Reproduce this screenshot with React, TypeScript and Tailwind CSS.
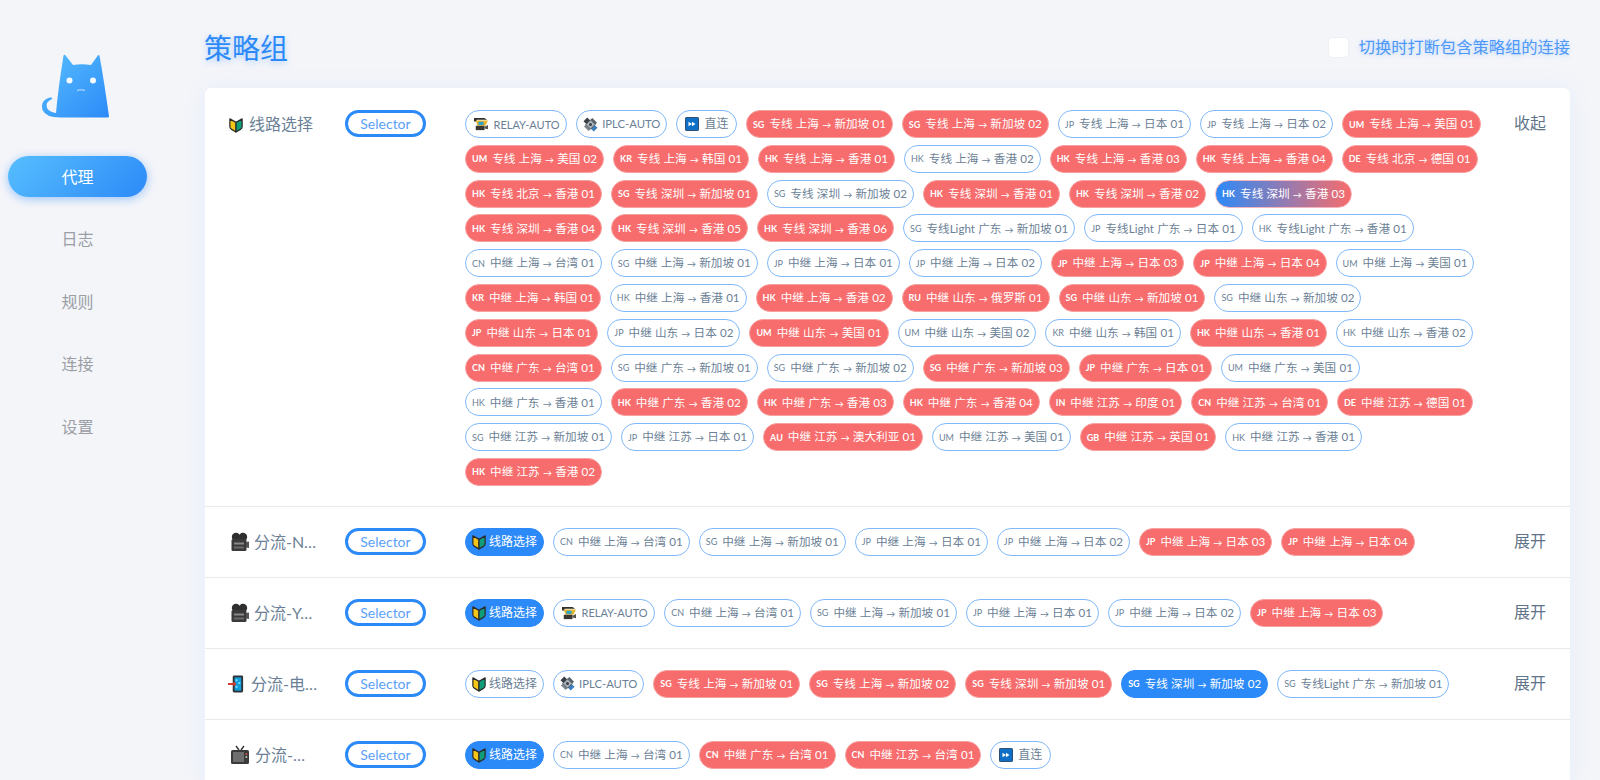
import React from "react";

type S = "n" | "r" | "b" | "g";
type Item = [S, string, string?];

const FONT = 'Lato,"Noto Sans CJK SC",sans-serif';

function Shield() {
  return (
    <svg viewBox="0 0 16 18" className="inline-block w-[14px] h-[16px] align-[-3px]">
      <path d="M1 2 L8 6 L8 17 L3 14 Q1 13 1 11 Z" fill="#f5c518" stroke="#2b2b2b" strokeWidth="1.4" strokeLinejoin="round" />
      <path d="M15 2 L8 6 L8 17 L13 14 Q15 13 15 11 Z" fill="#0f9d7a" stroke="#2b2b2b" strokeWidth="1.4" strokeLinejoin="round" />
    </svg>
  );
}
function Relay() {
  return (
    <svg viewBox="0 0 18 16" className="inline-block w-[16px] h-[14px] align-[-3px]">
      <path d="M1 1 H13 L16 3 H4 L4 5 H1 Z" fill="#33302c" />
      <path d="M3 4 H17 L14 10 H5 Z" fill="#e8b72e" />
      <rect x="6" y="5.5" width="6" height="3.5" fill="#2aa3c9" />
      <path d="M3 10 H13 V15 H3 Z" fill="#3b3733" />
      <path d="M13 11 L17 9 V14 L13 13 Z" fill="#57524c" />
    </svg>
  );
}
function Sat() {
  return (
    <svg viewBox="0 0 16 16" className="inline-block w-[15px] h-[15px] align-[-3px]">
      <path d="M0.5 4.5 L4.5 0.5 L8 4 L4 8 Z" fill="#3a3f45" />
      <path d="M8 12 L12 8 L15.5 11.5 L11.5 15.5 Z" fill="#3f7fbd" />
      <path d="M10 1 L15 6 L13 8 L8 3 Z" fill="#59636d" />
      <path d="M1 10 L3 8 L8 13 L6 15 Z" fill="#7d868f" />
      <path d="M3 8 L8 3 L13 8 L8 13 Z" fill="#aab2ba" stroke="#3a3f45" strokeWidth="0.8" />
      <circle cx="8" cy="8" r="1.6" fill="#3a3f45" />
    </svg>
  );
}
function Forward() {
  return (
    <svg viewBox="0 0 16 16" className="inline-block w-[14px] h-[14px] align-[-3px]">
      <rect x="0.5" y="0.5" width="15" height="15" rx="1" fill="#0f6fc6" stroke="#1b3c5c" />
      <path d="M4 5.5 L8 8 L4 10.5 Z M8 5.5 L12 8 L8 10.5 Z" fill="#fff" />
    </svg>
  );
}
function Camera() {
  return (
    <svg viewBox="0 0 20 20" className="inline-block w-[20px] h-[20px] align-[-4px] ml-[2px] mr-[4px]">
      <circle cx="6" cy="5" r="4.2" fill="#2f2f2f" />
      <circle cx="13" cy="5" r="4.2" fill="#2f2f2f" />
      <rect x="1.5" y="7" width="15" height="12" rx="1.5" fill="#3a3a3a" />
      <rect x="4" y="10.5" width="10" height="2" fill="#8a8a8a" />
      <rect x="4" y="14.5" width="10" height="2" fill="#6b6b6b" />
      <path d="M16 10 L19 9.5 V16 L16 15.5 Z" fill="#555" />
    </svg>
  );
}
function Phone() {
  return (
    <svg viewBox="0 0 18 20" className="inline-block w-[17px] h-[20px] align-[-4px] mr-[6px]">
      <rect x="5" y="1" width="11" height="18" rx="1.5" fill="#2d3338" />
      <rect x="7" y="3" width="7" height="14" fill="#0f9fdc" />
      <rect x="8" y="5" width="2" height="2" fill="#7fdcff" />
      <rect x="11" y="8" width="2" height="2" fill="#7fdcff" />
      <rect x="8" y="12" width="2" height="2" fill="#7fdcff" />
      <path d="M0 9 H6 V7 L9 10 L6 13 V11 H0 Z" fill="#d43a2f" />
    </svg>
  );
}
function Tv() {
  return (
    <svg viewBox="0 0 20 20" className="inline-block w-[20px] h-[20px] align-[-4px] ml-[2px] mr-[5px]">
      <path d="M6 1 L9 5 M14 1 L11 5" stroke="#333" strokeWidth="1.4" />
      <rect x="1" y="5" width="18" height="14" rx="1.5" fill="#3a3a3a" />
      <rect x="3" y="7" width="11" height="10" fill="#6e6e6e" />
      <circle cx="16.4" cy="9" r="1" fill="#e0533d" />
      <circle cx="16.4" cy="12" r="1" fill="#c9c9c9" />
    </svg>
  );
}

const ICONS: Record<string, { node: React.ReactNode; pad: string; gap: string }> = {
  shield: { node: <Shield />, pad: "px-[6px]", gap: "mr-[3px]" },
  relay: { node: <Relay />, pad: "px-[6.5px]", gap: "mr-[5px]" },
  sat: { node: <Sat />, pad: "px-[6px]", gap: "mr-[4px]" },
  fwd: { node: <Forward />, pad: "px-[7.5px]", gap: "mr-[5.5px]" },
};

const STYLES: Record<S, string> = {
  n: "bg-white border-[#7fb8fb] text-[#6b7f96]",
  r: "bg-[#f76c6c] border-[#f9a0a0] text-white",
  b: "bg-[#2c8af8] border-[#2c8af8] text-white",
  g: "bg-[linear-gradient(90deg,#2c8af8,#f76c6c)] border-[#f4b4bc] text-white",
};

function Label({ text }: { text?: string }) {
  const parts = (text ?? "").split("→");
  if (parts.length < 2) {
    const cls = text === "RELAY-AUTO" ? "text-[11px]" : text === "IPLC-AUTO" ? "text-[11.3px]" : "";
    return <span className={cls}>{text}</span>;
  }
  return (
    <span className="whitespace-pre text-[11.6px] [word-spacing:0.25px]">
      {parts[0]}
      <span className="text-[9px]">→</span>
      {parts[1]}
    </span>
  );
}

function Pill({ item }: { item: Item }) {
  const [s, flag, text] = item;
  const icon = ICONS[flag];
  return (
    <span className={`inline-flex items-center h-[28px] rounded-[14px] border text-[12px] leading-none whitespace-nowrap ${icon ? icon.pad : "px-[6px]"} ${STYLES[s]}`}>
      {icon ? (
        <span className={`inline-flex ${icon.gap}`}>{icon.node}</span>
      ) : (
        <span className={`text-[9px] mr-[5px] ${s === "n" ? "font-normal" : "font-bold"}`}>{flag}</span>
      )}
      <Label text={text} />
    </span>
  );
}

const A = "→";
const first: Item[] = [
  ["n", "relay", "RELAY-AUTO"],
  ["n", "sat", "IPLC-AUTO"],
  ["n", "fwd", "直连"],
  ["r", "SG", `专线 上海 ${A} 新加坡 01`],
  ["r", "SG", `专线 上海 ${A} 新加坡 02`],
  ["n", "JP", `专线 上海 ${A} 日本 01`],
  ["n", "JP", `专线 上海 ${A} 日本 02`],
  ["r", "UM", `专线 上海 ${A} 美国 01`],
  ["r", "UM", `专线 上海 ${A} 美国 02`],
  ["r", "KR", `专线 上海 ${A} 韩国 01`],
  ["r", "HK", `专线 上海 ${A} 香港 01`],
  ["n", "HK", `专线 上海 ${A} 香港 02`],
  ["r", "HK", `专线 上海 ${A} 香港 03`],
  ["r", "HK", `专线 上海 ${A} 香港 04`],
  ["r", "DE", `专线 北京 ${A} 德国 01`],
  ["r", "HK", `专线 北京 ${A} 香港 01`],
  ["r", "SG", `专线 深圳 ${A} 新加坡 01`],
  ["n", "SG", `专线 深圳 ${A} 新加坡 02`],
  ["r", "HK", `专线 深圳 ${A} 香港 01`],
  ["r", "HK", `专线 深圳 ${A} 香港 02`],
  ["g", "HK", `专线 深圳 ${A} 香港 03`],
  ["r", "HK", `专线 深圳 ${A} 香港 04`],
  ["r", "HK", `专线 深圳 ${A} 香港 05`],
  ["r", "HK", `专线 深圳 ${A} 香港 06`],
  ["n", "SG", `专线Light 广东 ${A} 新加坡 01`],
  ["n", "JP", `专线Light 广东 ${A} 日本 01`],
  ["n", "HK", `专线Light 广东 ${A} 香港 01`],
  ["n", "CN", `中继 上海 ${A} 台湾 01`],
  ["n", "SG", `中继 上海 ${A} 新加坡 01`],
  ["n", "JP", `中继 上海 ${A} 日本 01`],
  ["n", "JP", `中继 上海 ${A} 日本 02`],
  ["r", "JP", `中继 上海 ${A} 日本 03`],
  ["r", "JP", `中继 上海 ${A} 日本 04`],
  ["n", "UM", `中继 上海 ${A} 美国 01`],
  ["r", "KR", `中继 上海 ${A} 韩国 01`],
  ["n", "HK", `中继 上海 ${A} 香港 01`],
  ["r", "HK", `中继 上海 ${A} 香港 02`],
  ["r", "RU", `中继 山东 ${A} 俄罗斯 01`],
  ["r", "SG", `中继 山东 ${A} 新加坡 01`],
  ["n", "SG", `中继 山东 ${A} 新加坡 02`],
  ["r", "JP", `中继 山东 ${A} 日本 01`],
  ["n", "JP", `中继 山东 ${A} 日本 02`],
  ["r", "UM", `中继 山东 ${A} 美国 01`],
  ["n", "UM", `中继 山东 ${A} 美国 02`],
  ["n", "KR", `中继 山东 ${A} 韩国 01`],
  ["r", "HK", `中继 山东 ${A} 香港 01`],
  ["n", "HK", `中继 山东 ${A} 香港 02`],
  ["r", "CN", `中继 广东 ${A} 台湾 01`],
  ["n", "SG", `中继 广东 ${A} 新加坡 01`],
  ["n", "SG", `中继 广东 ${A} 新加坡 02`],
  ["r", "SG", `中继 广东 ${A} 新加坡 03`],
  ["r", "JP", `中继 广东 ${A} 日本 01`],
  ["n", "UM", `中继 广东 ${A} 美国 01`],
  ["n", "HK", `中继 广东 ${A} 香港 01`],
  ["r", "HK", `中继 广东 ${A} 香港 02`],
  ["r", "HK", `中继 广东 ${A} 香港 03`],
  ["r", "HK", `中继 广东 ${A} 香港 04`],
  ["r", "IN", `中继 江苏 ${A} 印度 01`],
  ["r", "CN", `中继 江苏 ${A} 台湾 01`],
  ["r", "DE", `中继 江苏 ${A} 德国 01`],
  ["n", "SG", `中继 江苏 ${A} 新加坡 01`],
  ["n", "JP", `中继 江苏 ${A} 日本 01`],
  ["r", "AU", `中继 江苏 ${A} 澳大利亚 01`],
  ["n", "UM", `中继 江苏 ${A} 美国 01`],
  ["r", "GB", `中继 江苏 ${A} 英国 01`],
  ["n", "HK", `中继 江苏 ${A} 香港 01`],
  ["r", "HK", `中继 江苏 ${A} 香港 02`],
];

const groups: { icon: React.ReactNode; name: string; action: string; items: Item[] }[] = [
  { icon: <span className="ml-[1px] mr-[6px]"><Shield /></span>, name: "线路选择", action: "收起", items: first },
  {
    icon: <Camera />,
    name: "分流-Netflix",
    action: "展开",
    items: [
      ["b", "shield", "线路选择"],
      ["n", "CN", `中继 上海 ${A} 台湾 01`],
      ["n", "SG", `中继 上海 ${A} 新加坡 01`],
      ["n", "JP", `中继 上海 ${A} 日本 01`],
      ["n", "JP", `中继 上海 ${A} 日本 02`],
      ["r", "JP", `中继 上海 ${A} 日本 03`],
      ["r", "JP", `中继 上海 ${A} 日本 04`],
    ],
  },
  {
    icon: <Camera />,
    name: "分流-YouTube",
    action: "展开",
    items: [
      ["b", "shield", "线路选择"],
      ["n", "relay", "RELAY-AUTO"],
      ["n", "CN", `中继 上海 ${A} 台湾 01`],
      ["n", "SG", `中继 上海 ${A} 新加坡 01`],
      ["n", "JP", `中继 上海 ${A} 日本 01`],
      ["n", "JP", `中继 上海 ${A} 日本 02`],
      ["r", "JP", `中继 上海 ${A} 日本 03`],
    ],
  },
  {
    icon: <Phone />,
    name: "分流-电报消息",
    action: "展开",
    items: [
      ["n", "shield", "线路选择"],
      ["n", "sat", "IPLC-AUTO"],
      ["r", "SG", `专线 上海 ${A} 新加坡 01`],
      ["r", "SG", `专线 上海 ${A} 新加坡 02`],
      ["r", "SG", `专线 深圳 ${A} 新加坡 01`],
      ["b", "SG", `专线 深圳 ${A} 新加坡 02`],
      ["n", "SG", `专线Light 广东 ${A} 新加坡 01`],
    ],
  },
  {
    icon: <Tv />,
    name: "分流-巴哈姆特",
    action: "",
    items: [
      ["b", "shield", "线路选择"],
      ["n", "CN", `中继 上海 ${A} 台湾 01`],
      ["r", "CN", `中继 广东 ${A} 台湾 01`],
      ["r", "CN", `中继 江苏 ${A} 台湾 01`],
      ["n", "fwd", "直连"],
    ],
  },
];

const nav = ["代理", "日志", "规则", "连接", "设置"];

export default function App() {
  return (
    <div className="flex h-[780px] overflow-hidden bg-[#f4f5f9]" style={{ fontFamily: FONT }}>
      <aside className="w-[205px] shrink-0 flex flex-col">
        <div className="mt-[50px] ml-[40px] w-[80px] h-[75px]">
          <svg viewBox="0 0 80 75" className="w-[80px] h-[75px]">
            <defs>
              <linearGradient id="cat" x1="0" y1="0" x2="1" y2="1">
                <stop offset="0" stopColor="#57befe" />
                <stop offset="1" stopColor="#2c8af8" />
              </linearGradient>
            </defs>
            <path
              d="M23.5 5.5 Q24.5 4 26 6 L33 15 Q41.5 13.5 51 15 L57.5 6 Q59 4 59.5 6 Q64 30 69 66.5 Q69.3 67.5 67.5 67.5 L22 67.5 Q6 68 2.5 60 Q0 50 10 47.5 Q13 47 12 49 Q5 52 7 58 Q9 62 16 63 Q18 40 23.5 5.5 Z"
              fill="url(#cat)"
            />
            <circle cx="29.5" cy="30.5" r="3" fill="#fff" opacity="0.95" />
            <circle cx="53" cy="30.5" r="3" fill="#fff" opacity="0.95" />
            <path d="M37 40.5 Q39 39.5 41 40 Q43 39.5 45 40.5" stroke="#d4e9ff" strokeWidth="0.9" fill="none" />
          </svg>
        </div>
        <nav className="mt-[31px] flex flex-col gap-[21.6px]">
          {nav.map((n, i) => (
            <div
              key={n}
              className={
                i === 0
                  ? "ml-[8px] w-[139px] h-[41px] rounded-[21px] flex items-center justify-center text-[16px] text-white bg-[linear-gradient(135deg,#57befe,#2c8af8)] shadow-[0_2px_10px_rgba(44,138,248,0.45)]"
                  : "ml-[8px] w-[139px] h-[41px] flex items-center justify-center text-[16px] text-[#9a9ea5]"
              }
            >
              {n}
            </div>
          ))}
        </nav>
      </aside>
      <main className="flex-1 pr-[30px] min-w-0">
        <header className="h-[88px] flex items-start justify-between">
          <h1 className="mt-[27px] -ml-[1px] text-[28px] leading-[42px] text-[#2c8af8] [text-shadow:0_2px_6px_rgba(44,138,248,0.35)]">策略组</h1>
          <label className="mt-[36px] flex items-center gap-[10px]">
            <span className="w-[21px] h-[21px] rounded-[4px] bg-white border border-[#eef0f4]" />
            <span className="text-[16.25px] leading-[22px] text-[#4d98f8] [text-shadow:0_1px_4px_rgba(44,138,248,0.3)]">切换时打断包含策略组的连接</span>
          </label>
        </header>
        <section className="bg-white rounded-[6px] shadow-[0_0_24px_rgba(44,138,248,0.07)]">
          {groups.map((g, i) => (
            <div key={i} className={`flex items-start ${i > 0 ? "border-t border-[#e8eaee] pt-[21px] pb-[21px]" : "pt-[22px] pb-[20px]"}`}>
              <div className="ml-[23px] w-[91px] mr-[26px] shrink-0 h-[28px] leading-[28px] text-[16px] text-[#6b7f96] truncate">
                {g.icon}
                {g.name}
              </div>
              <div className="w-[81px] shrink-0 h-[27px] rounded-[14px] border-[3px] border-[#2c8af8] flex items-center justify-center text-[14px] text-[#5b9ffa]">
                Selector
              </div>
              <div className="ml-[39px] w-[1022px] shrink-0 flex flex-wrap gap-x-[9px] gap-y-[6.8px] content-start">
                {g.items.map((it, j) => (
                  <Pill key={j} item={it} />
                ))}
              </div>
              <div className="ml-[27px] text-[16px] leading-[26px] text-[#5f7389]">{g.action}</div>
            </div>
          ))}
        </section>
      </main>
    </div>
  );
}
